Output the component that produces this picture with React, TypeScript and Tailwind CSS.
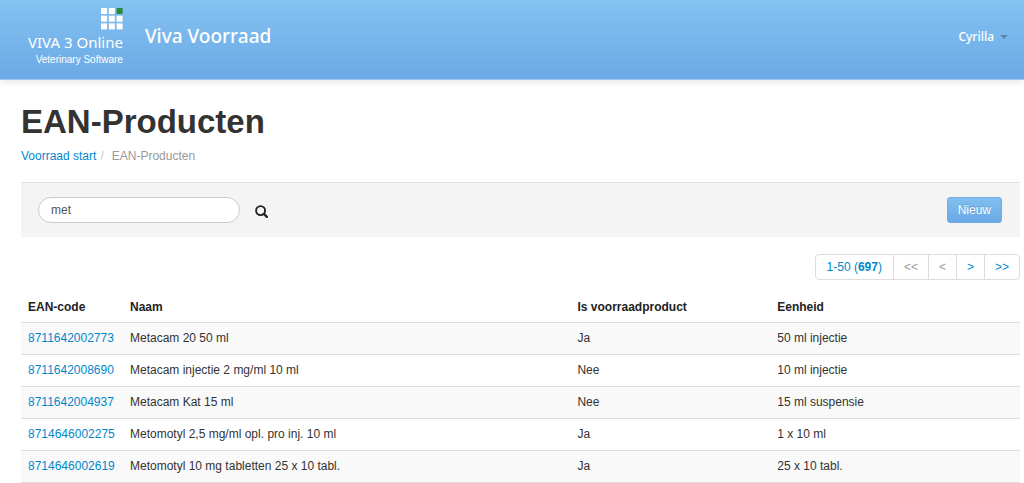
import { useState } from 'react';

interface Product {
  ean: string;
  name: string;
  inStock: boolean;
  unit: string;
}

const products: Product[] = [
  { ean: '8711642002773', name: 'Metacam 20 50 ml', inStock: true, unit: '50 ml injectie' },
  { ean: '8711642008690', name: 'Metacam injectie 2 mg/ml 10 ml', inStock: false, unit: '10 ml injectie' },
  { ean: '8711642004937', name: 'Metacam Kat 15 ml', inStock: false, unit: '15 ml suspensie' },
  { ean: '8714646002275', name: 'Metomotyl 2,5 mg/ml opl. pro inj. 10 ml', inStock: true, unit: '1 x 10 ml' },
  { ean: '8714646002619', name: 'Metomotyl 10 mg tabletten 25 x 10 tabl.', inStock: true, unit: '25 x 10 tabl.' },
];

const squares = [0, 1, 2, 3, 4, 5, 6, 7, 8];

const Logo = () => (
  <a href="#" className="flex flex-col items-end text-white">
    <svg width="22" height="22" viewBox="0 0 22 22" aria-hidden="true">
      {squares.map((i) => (
        <rect
          key={i}
          x={(i % 3) * 7.8}
          y={Math.floor(i / 3) * 7.7}
          width="6"
          height="6"
          fill={i === 2 ? '#2b8a37' : '#ffffff'}
        />
      ))}
    </svg>
    <span className="mt-1 font-['Noto_Sans',sans-serif] text-[15px] leading-4">VIVA 3 Online</span>
    <span className="mt-1 font-['Liberation_Sans',Arial,sans-serif] text-[10px] leading-3">Veterinary Software</span>
  </a>
);

const Header = () => (
  <header className="flex h-20 items-start justify-between border-b border-[#9cc8ef] bg-linear-to-b from-[#84c2f1] to-[#6ba9e6] pr-4 pl-7 pt-2 shadow-[0_1px_8px_rgba(0,0,0,0.12)]">
    <div className="flex items-start">
      <Logo />
      <a
        href="#"
        className="mt-3 ml-[22px] font-['Noto_Sans',sans-serif] text-[19px] leading-8 font-medium text-white"
      >
        Viva Voorraad
      </a>
    </div>
    <button
      type="button"
      className="mt-[17px] flex items-center gap-[6px] font-['Noto_Sans',sans-serif] text-xs leading-6 font-medium text-white"
    >
      Cyrilla
      <span className="border-x-4 border-t-4 border-x-transparent border-t-[#5b84ab]" />
    </button>
  </header>
);

const SearchBar = () => {
  const [query, setQuery] = useState('met');

  return (
    <div className="mt-[17px] flex items-center justify-between border-t border-[#dfdfdf] bg-[#f4f4f4] pt-[14px] pr-[18px] pb-[14px] pl-[17px]">
      <form className="flex items-center" onSubmit={(e) => e.preventDefault()}>
        <input
          type="text"
          aria-label="Zoeken"
          value={query}
          onChange={(e) => setQuery(e.target.value)}
          className="h-[26px] w-[202px] rounded-full border border-[#cccccc] bg-white px-3 text-[#555555] outline-none"
        />
        <button type="submit" aria-label="Zoek" className="ml-[15px] pt-[2px]">
          <svg width="13" height="13" viewBox="0 0 13 13" fill="none" stroke="#222222" aria-hidden="true">
            <circle cx="5.6" cy="5.6" r="4.5" strokeWidth="1.9" />
            <path d="M8.9 8.9 L11.9 11.9" strokeWidth="2.3" strokeLinecap="round" />
          </svg>
        </button>
      </form>
      <button
        type="button"
        className="h-[26px] rounded-[3px] border border-[#72aee6] bg-linear-to-b from-[#80bff0] to-[#6ba9e6] px-[10px] text-white [text-shadow:0_-1px_0_rgba(0,0,0,0.2)]"
      >
        Nieuw
      </button>
    </div>
  );
};

const Pagination = () => (
  <nav aria-label="Paginering" className="mt-[17px] flex justify-end">
    <div className="flex divide-x divide-[#dddddd] rounded border border-[#dddddd] leading-6 text-[#0088cc]">
      <a href="#" className="px-[11px]">
        1-50 (<b>697</b>)
      </a>
      <span className="px-[10px] text-[#999999]">&lt;&lt;</span>
      <span className="px-[10px] text-[#999999]">&lt;</span>
      <a href="#" className="px-[10px]">&gt;</a>
      <a href="#" className="px-[10px]">&gt;&gt;</a>
    </div>
  </nav>
);

const ProductTable = () => (
  <table className="mt-[13px] w-full table-fixed text-left leading-[17px]">
    <thead>
      <tr className="text-[#222222]">
        <th className="w-[102px] px-[7px] py-[6px] font-bold">EAN-code</th>
        <th className="px-[7px] py-[6px] font-bold">Naam</th>
        <th className="w-1/5 px-[7px] py-[6px] font-bold">Is voorraadproduct</th>
        <th className="w-1/4 px-[7px] py-[6px] font-bold">Eenheid</th>
      </tr>
    </thead>
    <tbody>
      {products.map((product) => (
        <tr key={product.ean} className="border-t border-[#dddddd] last:border-b odd:bg-[#f9f9f9]">
          <td className="px-[7px] py-[7px]">
            <a href="#" className="text-[#0088cc]">{product.ean}</a>
          </td>
          <td className="px-[7px] py-[7px]">{product.name}</td>
          <td className="px-[7px] py-[7px]">{product.inStock ? 'Ja' : 'Nee'}</td>
          <td className="px-[7px] py-[7px]">{product.unit}</td>
        </tr>
      ))}
    </tbody>
  </table>
);

export default function App() {
  return (
    <div className="bg-white font-['Liberation_Sans',Arial,sans-serif] text-xs text-[#333333]">
      <Header />
      <main className="pt-[22px] pr-1 pl-[21px]">
        <h1 className="text-[33px] leading-10 font-bold">EAN-Producten</h1>
        <nav aria-label="Kruimelpad" className="mt-[5px] flex leading-[18px]">
          <a href="#" className="text-[#0088cc]">Voorraad start</a>
          <span className="px-1 text-[#cccccc]">/</span>
          <span className="ml-1 text-[#999999]">EAN-Producten</span>
        </nav>
        <SearchBar />
        <Pagination />
        <ProductTable />
      </main>
    </div>
  );
}
